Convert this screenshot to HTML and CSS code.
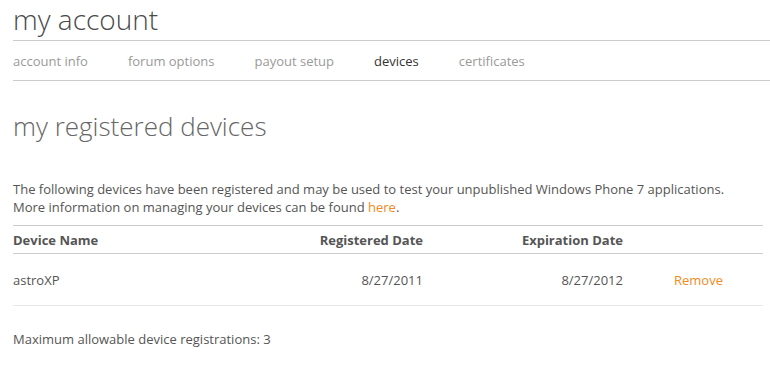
FILE: index.html
```html
<!DOCTYPE html>
<html lang="en">
<head>
    <meta charset="UTF-8">
    <title>my account - devices</title>
    <link rel="stylesheet" href="styles.css">
</head>
<body>
    <header class="page-header">
        <h1>my account</h1>
        <nav class="account-nav">
            <a href="#">account info</a>
            <a href="#">forum options</a>
            <a href="#">payout setup</a>
            <a href="#" class="active">devices</a>
            <a href="#">certificates</a>
        </nav>
    </header>

    <main class="content">
        <h2>my registered devices</h2>
        <p class="intro">
            The following devices have been registered and may be used to test your unpublished Windows Phone 7 applications.<br>
            More information on managing your devices can be found <a href="#">here</a>.
        </p>

        <table class="device-table">
            <thead>
                <tr>
                    <th class="col-name">Device Name</th>
                    <th class="col-date">Registered Date</th>
                    <th class="col-date">Expiration Date</th>
                    <th class="col-action"></th>
                </tr>
            </thead>
            <tbody>
                <tr>
                    <td class="col-name">astroXP</td>
                    <td class="col-date">8/27/2011</td>
                    <td class="col-date">8/27/2012</td>
                    <td class="col-action"><a href="#">Remove</a></td>
                </tr>
            </tbody>
        </table>

        <p class="limit">Maximum allowable device registrations: 3</p>
    </main>
</body>
</html>
```

FILE: styles.css
```css
:root {
    --text: #555555;
    --muted: #9a9a9a;
    --heading: #666666;
    --line: #cccccc;
    --line-light: #e8e8e8;
    --accent: #f08a1c;
}

* {
    margin: 0;
    padding: 0;
    box-sizing: border-box;
}

body {
    font-family: "Open Sans", "Liberation Sans", sans-serif;
    font-size: 13px;
    color: var(--text);
    background: #ffffff;
    padding-left: 13px;
}

a {
    text-decoration: none;
    color: var(--accent);
}

.page-header h1 {
    font-size: 28px;
    font-weight: 300;
    color: #4a4a4a;
    line-height: 38px;
    height: 41px;
    border-bottom: 1px solid var(--line);
}

.account-nav {
    display: flex;
    gap: 40px;
    height: 40px;
    align-items: center;
    border-bottom: 1px solid var(--line);
}

.account-nav a {
    color: var(--muted);
}

.account-nav a.active {
    color: #333333;
}

.content {
    width: 750px;
}

.content h2 {
    font-size: 26px;
    font-weight: 300;
    color: var(--heading);
    line-height: 36px;
    margin-top: 27px;
}

.intro {
    line-height: 18px;
    margin-top: 36px;
    padding-bottom: 9px;
}

.device-table {
    width: 100%;
    border-collapse: collapse;
    border-top: 1px solid var(--line);
}

.device-table th {
    font-weight: bold;
    height: 28px;
    border-bottom: 1px solid var(--line);
    color: var(--text);
}

.device-table td {
    height: 52px;
    border-bottom: 1px solid var(--line-light);
}

.col-name {
    text-align: left;
    width: 210px;
}

.col-date {
    text-align: right;
    width: 200px;
}

.col-action {
    text-align: left;
    padding-left: 51px;
}

.limit {
    margin-top: 24px;
}
```
